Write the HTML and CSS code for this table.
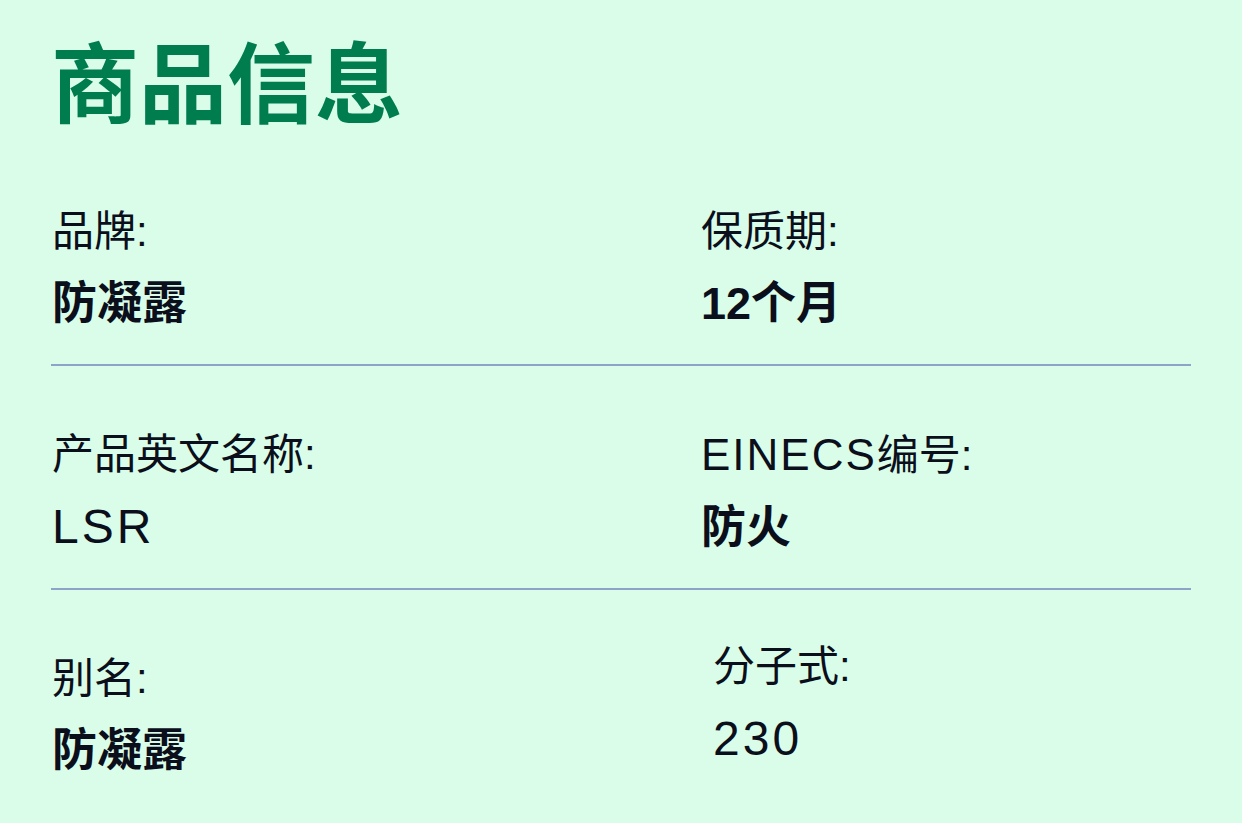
FILE: index.html
```html
<!DOCTYPE html>
<html lang="zh-CN">
<head>
<meta charset="utf-8">
<title>商品信息</title>
<link rel="stylesheet" href="styles.css">
</head>
<body>
<main class="panel">
  <h1 class="title">商品信息</h1>
  <section class="row">
    <div class="field">
      <div class="label">品牌:</div>
      <div class="value bold">防凝露</div>
    </div>
    <div class="field">
      <div class="label">保质期:</div>
      <div class="value bold">12个月</div>
    </div>
  </section>
  <hr class="divider">
  <section class="row">
    <div class="field">
      <div class="label">产品英文名称:</div>
      <div class="value"><span class="lat">LSR</span></div>
    </div>
    <div class="field">
      <div class="label"><span class="lat">EINECS</span>编号:</div>
      <div class="value bold">防火</div>
    </div>
  </section>
  <hr class="divider">
  <section class="row">
    <div class="field">
      <div class="label">别名:</div>
      <div class="value bold">防凝露</div>
    </div>
    <div class="field shifted">
      <div class="label">分子式:</div>
      <div class="value"><span class="lat">230</span></div>
    </div>
  </section>
</main>
</body>
</html>
```
FILE: styles.css
```css
html, body {
  margin: 0;
  padding: 0;
  background: #dafde9;
}
body {
  width: 1242px;
  height: 823px;
  overflow: hidden;
  font-family: "Liberation Sans", "Noto Sans CJK SC", sans-serif;
  color: #0a0f1b;
}
.panel {
  padding: 27px 0 0 51px;
  width: 1140px;
}
.title {
  margin: 0;
  font-size: 88px;
  line-height: 102px;
  font-weight: 700;
  color: #007d4f;
  font-family: "Noto Sans CJK SC", sans-serif;
}
.row {
  display: grid;
  grid-template-columns: 649px 1fr;
}
.row:first-of-type {
  margin-top: 78px;
}
.field {
  display: flex;
  flex-direction: column;
  gap: 20px;
  padding-left: 1px;
}
.label {
  font-size: 42px;
  line-height: 50px;
}
.label .lat {
  font-size: 44px;
  letter-spacing: 2px;
}
.value {
  font-size: 45px;
  line-height: 54px;
}
.value .lat {
  font-size: 48px;
  letter-spacing: 3px;
}
.bold {
  font-weight: 700;
}
.divider {
  margin: 33px 0 64px;
  border: 0;
  height: 2px;
  background: #8ea3c8;
}
.shifted {
  padding-left: 13px;
  margin-top: -12px;
}
```
